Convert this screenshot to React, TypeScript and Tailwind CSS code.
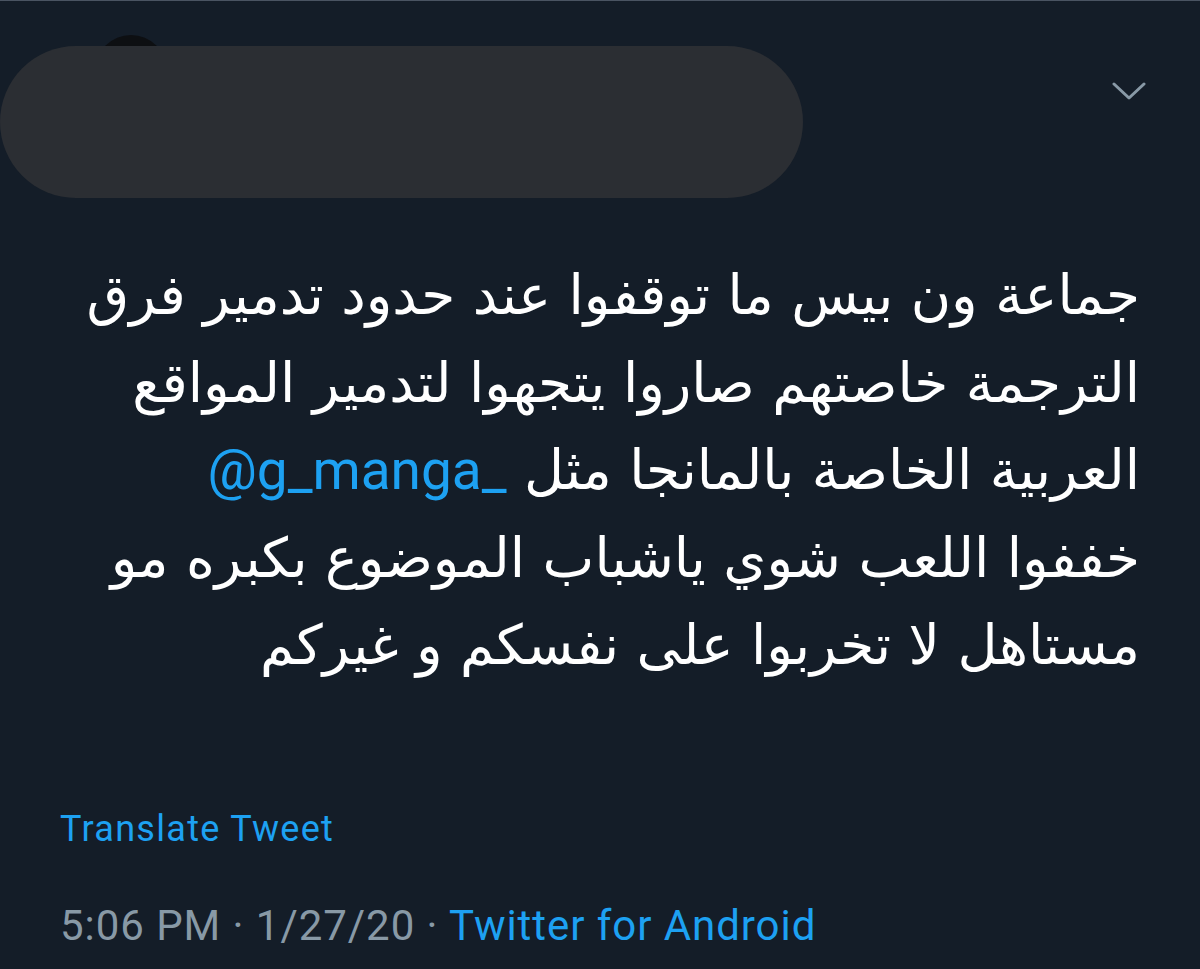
import React from 'react';

const lines: React.ReactNode[] = [
    'جماعة ون بيس ما توقفوا عند حدود تدمير فرق',
    'الترجمة خاصتهم صاروا يتجهوا لتدمير المواقع',
    <>
        العربية الخاصة بالمانجا مثل{' '}
        <bdi dir="ltr" className="text-[#1da1f2] font-['Roboto',sans-serif]">@g_manga_</bdi>
    </>,
    'خففوا اللعب شوي ياشباب الموضوع بكبره مو',
    'مستاهل لا تخربوا على نفسكم و غيركم',
];

const Chevron = () => (
    <svg width="34" height="18" viewBox="0 0 34 18" fill="none">
        <polyline points="2,2 17,16 32,2" stroke="#8899a6" strokeWidth="3" strokeLinecap="round" strokeLinejoin="round" />
    </svg>
);

export default function App() {
    return (
        <div className="w-[1200px] h-[969px] bg-[#141d28] border-t border-[#4a5462] overflow-hidden font-['Roboto',sans-serif]">
            <div className="relative h-[230px] pt-[34px]">
                {/* avatar, mostly hidden under the redaction */}
                <div className="ml-[95px] w-[72px] h-[72px] rounded-full bg-[#0d0f12]" />
                <div className="absolute left-0 top-[45px] w-[803px] h-[152px] rounded-full bg-[#2b2e33]" />
                <div className="absolute right-[54px] top-[81px]">
                    <Chevron />
                </div>
            </div>
            <div dir="rtl" className="pr-[60px] text-white text-[55px] leading-[87.5px] font-['DejaVu_Sans',sans-serif] mt-[21px]">
                {lines.map((l, i) => (
                    <div key={i} className="whitespace-nowrap">{l}</div>
                ))}
            </div>
            <div className="pl-[60px] mt-[119px] text-[36px] leading-[40px] tracking-[1.3px] text-[#1da1f2]">Translate Tweet</div>
            <div className="pl-[60px] mt-[53px] text-[42px] leading-[48px] tracking-[0.95px] text-[#8899a6]">
                5:06 PM · 1/27/20 · <span className="text-[#1da1f2]">Twitter for Android</span>
            </div>
        </div>
    );
}
